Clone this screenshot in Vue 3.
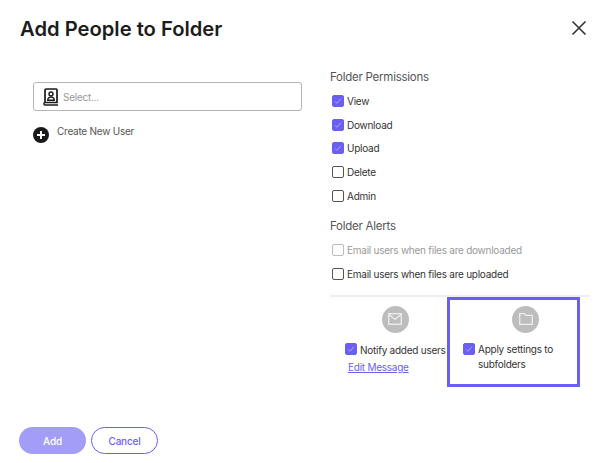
<script setup>
const permissions = [
  { label: 'View', checked: true },
  { label: 'Download', checked: true },
  { label: 'Upload', checked: true },
  { label: 'Delete', checked: false },
  { label: 'Admin', checked: false }
]
const alerts = [
  { label: 'Email users when files are downloaded', disabled: true },
  { label: 'Email users when files are uploaded', disabled: false }
]
</script>

<template>
  <div class="modal">
    <header class="head">
      <h1>Add People to Folder</h1>
      <button class="close" aria-label="Close">
        <svg width="16" height="16" viewBox="0 0 16 16"><path d="M1.5 1.5l13 13M14.5 1.5l-13 13" stroke="#333" stroke-width="1.6" fill="none" /></svg>
      </button>
    </header>

    <div class="body">
      <section class="left">
        <div class="select">
          <svg width="16" height="18" viewBox="0 0 16 18" fill="none" stroke="#1a1a1a">
            <path d="M2 14.5V2.2C2 1.5 2.5 1 3.2 1h10c.6 0 .8.4.8 1v12.5H2z" stroke-width="1.7" />
            <path d="M1 14.5v1.6c0 .5.4.9.9.9H15" stroke-width="1.5" />
            <circle cx="8" cy="6" r="2" stroke-width="1.4" />
            <path d="M4.7 12.3c0-2.2 1.4-3.2 3.3-3.2s3.3 1 3.3 3.2z" stroke-width="1.4" />
          </svg>
          <span>Select...</span>
        </div>
        <div class="create">
          <span class="plus">
            <svg width="10" height="10" viewBox="0 0 10 10"><path d="M5 1v8M1 5h8" stroke="#fff" stroke-width="2" /></svg>
          </span>
          <span>Create New User</span>
        </div>
      </section>

      <section class="right">
        <h2>Folder Permissions</h2>
        <label class="row" v-for="p in permissions" :key="p.label">
          <span class="box" :class="{ on: p.checked }">
            <svg v-if="p.checked" width="8" height="8" viewBox="0 0 8 8"><path d="M1.2 4.4l1.8 1.9 3.8-4.6" stroke="#a9a3f8" stroke-width="1" fill="none" /></svg>
          </span>
          {{ p.label }}
        </label>

        <h2 class="alerts">Folder Alerts</h2>
        <label class="row" v-for="a in alerts" :key="a.label" :class="{ off: a.disabled }">
          <span class="box"></span>
          {{ a.label }}
        </label>

        <div class="options">
          <div class="option notify">
            <span class="circle">
              <svg width="14" height="12" viewBox="0 0 14 12" fill="none" stroke="#eee" stroke-width="1.3"><rect x="0.7" y="0.7" width="12.6" height="10.6" /><path d="M1 1.5l6 5 6-5" /></svg>
            </span>
            <div class="opt-text">
              <span class="box on">
                <svg width="8" height="8" viewBox="0 0 8 8"><path d="M1.2 4.4l1.8 1.9 3.8-4.6" stroke="#a9a3f8" stroke-width="1" fill="none" /></svg>
              </span>
              <div>
                <div class="nowrap">Notify added users</div>
                <a class="edit">Edit Message</a>
              </div>
            </div>
          </div>
          <div class="option apply">
            <span class="circle">
              <svg width="14" height="12" viewBox="0 0 14 12" fill="none" stroke="#eee" stroke-width="1.3"><path d="M.7 11.3V.7h4.6l1.3 1.6h6.7v9z" /></svg>
            </span>
            <div class="opt-text">
              <span class="box on">
                <svg width="8" height="8" viewBox="0 0 8 8"><path d="M1.2 4.4l1.8 1.9 3.8-4.6" stroke="#a9a3f8" stroke-width="1" fill="none" /></svg>
              </span>
              <div>Apply settings to subfolders</div>
            </div>
          </div>
        </div>
      </section>
    </div>

    <footer class="foot">
      <button class="btn add">Add</button>
      <button class="btn cancel">Cancel</button>
    </footer>
  </div>
</template>

<style>
html, body {
  margin: 0;
  background: #fff;
}
</style>

<style scoped>
.modal {
  width: 600px;
  height: 463px;
  box-sizing: border-box;
  display: flex;
  flex-direction: column;
  font-family: Inter, "Liberation Sans", sans-serif;
  font-size: 10px;
  letter-spacing: -0.25px;
  color: #333;
  overflow: hidden;
}

.head {
  display: flex;
  justify-content: space-between;
  align-items: center;
  padding: 15px 13px 0 20px;
  height: 26px;
}

h1 {
  margin: 0;
  font-size: 20.2px;
  letter-spacing: 0;
  font-weight: 600;
  color: #1c1c1c;
}

.close {
  display: flex;
  padding: 0;
  border: none;
  background: none;
}

.body {
  flex: 1;
  display: flex;
  padding-top: 28px;
}

.left {
  width: 269px;
  margin-left: 33px;
  padding-top: 13px;
}

.select {
  height: 29px;
  box-sizing: border-box;
  display: flex;
  align-items: center;
  gap: 4px;
  padding-left: 9px;
  border: 1px solid #b5b5b5;
  border-radius: 3px;
  color: #999;
}

.create {
  display: flex;
  align-items: flex-start;
  gap: 8px;
  margin-top: 14px;
  color: #555;
}

.plus {
  width: 16px;
  height: 16px;
  margin-top: 2px;
  border-radius: 50%;
  background: #1a1a1a;
  display: flex;
  align-items: center;
  justify-content: center;
}

.right {
  width: 260px;
  margin-left: 28px;
}

h2 {
  margin: 0 0 4px;
  font-size: 11.5px;
  line-height: 16px;
  font-weight: 400;
  color: #555;
}

h2.alerts {
  margin-top: 11px;
}

.row {
  display: flex;
  align-items: center;
  gap: 3px;
  height: 23.7px;
  padding-left: 2px;
}

.row.off {
  color: #999;
}

.row.off .box {
  border-color: #bbb;
}

.box {
  flex: none;
  width: 10px;
  height: 10px;
  box-sizing: content-box;
  border: 1px solid #555;
  border-radius: 2px;
  display: flex;
  align-items: center;
  justify-content: center;
}

.box.on {
  background: #6a5ff0;
  border-color: #6a5ff0;
}

.options {
  display: flex;
  margin-top: 9px;
  border-top: 2px solid #eee;
}

.option {
  box-sizing: border-box;
  display: flex;
  flex-direction: column;
  align-items: center;
}

.notify {
  width: 117px;
  padding-top: 9px;
}

.notify .circle {
  margin-left: 13px;
}

.apply {
  width: 133px;
  height: 90px;
  border: 3px solid #6a5ff0;
  padding-top: 6px;
}

.apply .circle {
  margin-left: 24px;
}

.circle {
  width: 27px;
  height: 27px;
  border-radius: 50%;
  background: #bdbdbd;
  display: flex;
  align-items: center;
  justify-content: center;
}

.opt-text {
  align-self: stretch;
  display: flex;
  gap: 3px;
  margin-top: 9px;
  line-height: 16px;
  padding-left: 15px;
}

.apply .opt-text {
  padding: 0 8px 0 13px;
  line-height: 15px;
}

.opt-text .box {
  margin-top: 1px;
}

.nowrap {
  white-space: nowrap;
}

.edit {
  color: #6a5ff0;
  text-decoration: underline;
  display: block;
  margin-top: 1px;
  margin-left: -12px;
}

.foot {
  display: flex;
  gap: 5px;
  padding: 0 0 9px 19px;
}

.btn {
  width: 67px;
  height: 27px;
  border-radius: 14px;
  box-sizing: border-box;
  font: 500 10px Inter, "Liberation Sans", sans-serif;
  letter-spacing: -0.2px;
}

.add {
  border: none;
  background: #a29ef7;
  color: #fff;
}

.cancel {
  border: 1.5px solid #6a5ff0;
  background: #fff;
  color: #6a5ff0;
}
</style>
